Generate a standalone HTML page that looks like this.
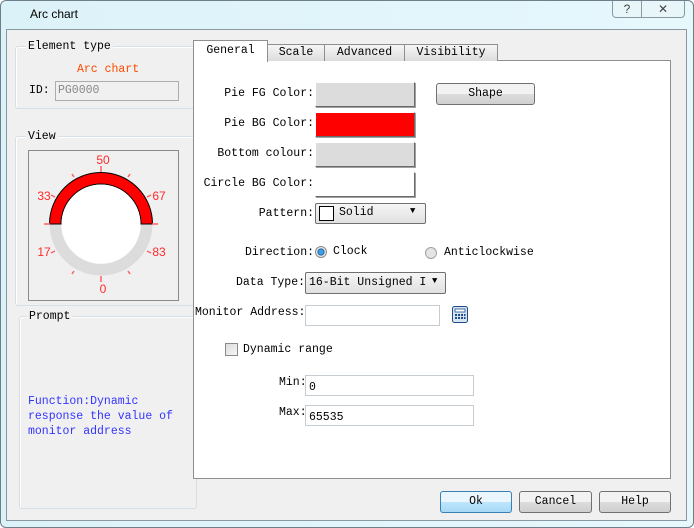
<!DOCTYPE html>
<html><head><style>
*{margin:0;padding:0;box-sizing:border-box}
body{width:694px;height:528px;position:relative;background:#fff;overflow:hidden;font-family:"Liberation Mono",monospace;font-size:11.5px;color:#000}
.a{position:absolute}
.win{left:0;top:0;width:694px;height:528px;background:linear-gradient(90deg,#dcf2f9,#e6f8fc);border:1px solid #6f7f8a;border-radius:6px}
.client{left:6px;top:29px;width:681px;height:492px;background:#f0f0f0;border:1px solid #8a98a3}
.grp{border:1px solid #d5dfe5;border-radius:3px;box-shadow:inset 1px 1px 0 #fff}
.lbl{background:#f0f0f0;padding:0 2px;white-space:nowrap}
.tab{top:44px;height:17px;background:linear-gradient(#f6f6f6,#dcdcdc);border:1px solid #8e8f8f;border-bottom:none;text-align:center;line-height:15px}
.cb{width:100px;height:25px;border:1px solid #fff;border-right-color:#6a6a6a;border-bottom-color:#6a6a6a;box-shadow:1px 1px 0 #a0a0a0}
.btn{height:22px;border:1px solid #707070;border-radius:3px;background:linear-gradient(#f2f2f2 50%,#dddddd 50%,#cfcfcf);text-align:center;line-height:20px}
.inp{height:21px;background:#fff;border:1px solid #c5cdd3;padding-left:3px;line-height:19px}
.r{text-align:right;white-space:nowrap}
</style></head><body>
<div class="a win"></div>
<div class="a" style="left:30px;top:7px;font-family:'Liberation Sans',sans-serif;font-size:12px">Arc chart</div>
<div class="a" style="left:612px;top:1px;width:30px;height:17px;border:1px solid #8a98a3;border-top:none;border-radius:0 0 0 4px;background:#e8f6fa;text-align:center;font-family:'Liberation Sans';font-size:12px;line-height:16px;color:#444">?</div>
<div class="a" style="left:642px;top:1px;width:43px;height:17px;border:1px solid #8a98a3;border-top:none;border-left:none;border-radius:0 0 4px 0;background:#e8f6fa;text-align:center;font-family:'Liberation Sans';font-size:12px;line-height:16px;color:#444">✕</div>
<div class="a client"></div>

<div class="a grp" style="left:15px;top:46px;width:180px;height:63px"></div>
<div class="a lbl" style="left:26px;top:40px">Element type</div>
<div class="a" style="left:77px;top:63px;color:#ff4b00">Arc chart</div>
<div class="a" style="left:29px;top:84px">ID:</div>
<div class="a" style="left:55px;top:81px;width:124px;height:20px;border:1px solid #adadad;background:#f0f0f0;color:#888;padding-left:2px;line-height:18px">PG0000</div>

<div class="a grp" style="left:15px;top:136px;width:180px;height:170px"></div>
<div class="a lbl" style="left:26px;top:130px">View</div>
<div class="a" style="left:28px;top:150px;width:151px;height:151px;border:1px solid #8a8a8a;background:#f0f0f0"></div>
<svg class="a" style="left:28px;top:150px" width="151" height="151" viewBox="28 150 151 151">
<path d="M49.5 224 A51.5 51.5 0 0 0 152.5 224 L141 224 A40 40 0 0 1 61 224 Z" fill="#dcdcdc"/>
<path d="M49.5 224 A51.5 51.5 0 0 1 152.5 224 L141 224 A40 40 0 0 0 61 224 Z" fill="#ff0000" stroke="#000" stroke-width="1"/>
<circle cx="101" cy="224" r="39.5" fill="#fff"/>
<g stroke="#ff6060" stroke-width="1.5">
<line x1="101" y1="166" x2="101" y2="172"/><line x1="101" y1="276" x2="101" y2="282"/>
<line x1="44" y1="224" x2="50" y2="224"/><line x1="152" y1="224" x2="158" y2="224"/>
<line x1="72" y1="174" x2="74" y2="177"/><line x1="130" y1="174" x2="128" y2="177"/>
<line x1="72" y1="274" x2="74" y2="271"/><line x1="130" y1="274" x2="128" y2="271"/>
<line x1="51" y1="195" x2="55" y2="197"/><line x1="151" y1="195" x2="147" y2="197"/>
<line x1="51" y1="253" x2="55" y2="251"/><line x1="151" y1="253" x2="147" y2="251"/>
</g>
<g fill="#ff2a2a" font-family="Liberation Sans" font-size="12" text-anchor="middle">
<text x="103" y="164">50</text><text x="44" y="200">33</text><text x="159" y="200">67</text>
<text x="44" y="256">17</text><text x="159" y="256">83</text><text x="103" y="293">0</text>
</g></svg>

<div class="a grp" style="left:19px;top:316px;width:178px;height:193px"></div>
<div class="a lbl" style="left:27px;top:310px">Prompt</div>
<div class="a" style="left:28px;top:394px;color:#3434ff;line-height:15px">Function:Dynamic<br>response the value of<br>monitor address</div>

<div class="a" style="left:193px;top:60px;width:478px;height:419px;background:#fff;border:1px solid #8e8f8f"></div>
<div class="a tab" style="left:267px;width:58px">Scale</div>
<div class="a tab" style="left:324px;width:81px">Advanced</div>
<div class="a tab" style="left:404px;width:94px">Visibility</div>
<div class="a" style="left:193px;top:40px;width:75px;height:22px;background:#fff;border:1px solid #8e8f8f;border-bottom:none;text-align:center;line-height:20px">General</div>

<div class="a r" style="right:380px;top:87px">Pie FG Color:</div>
<div class="a r" style="right:380px;top:117px">Pie BG Color:</div>
<div class="a r" style="right:380px;top:147px">Bottom colour:</div>
<div class="a r" style="right:380px;top:177px">Circle BG Color:</div>
<div class="a cb" style="left:315px;top:82px;background:#dcdcdc"></div>
<div class="a cb" style="left:315px;top:112px;background:#ff0000"></div>
<div class="a cb" style="left:315px;top:142px;background:#dcdcdc"></div>
<div class="a cb" style="left:315px;top:172px;background:#fff"></div>
<div class="a btn" style="left:436px;top:83px;width:99px">Shape</div>

<div class="a r" style="right:380px;top:207px">Pattern:</div>
<div class="a" style="left:315px;top:203px;width:111px;height:21px;border:1px solid #707070;border-radius:2px;background:linear-gradient(#f6f6f6,#e0e0e0)"></div>
<div class="a" style="left:319px;top:206px;width:15px;height:15px;border:1px solid #000;background:#fff"></div>
<div class="a" style="left:339px;top:206px">Solid</div>
<div class="a" style="left:410px;top:206px;font-size:9px">▼</div>

<div class="a r" style="right:380px;top:246px">Direction:</div>
<div class="a" style="left:315px;top:246px;width:12px;height:12px;border-radius:50%;border:1px solid #8a8a8a;background:radial-gradient(#3aa0e8 30%,#1a5a9a 45%,#e8e8e8 55%)"></div>
<div class="a" style="left:333px;top:245px">Clock</div>
<div class="a" style="left:425px;top:247px;width:12px;height:12px;border-radius:50%;border:1px solid #a0a0a0;background:#e4e4e4"></div>
<div class="a" style="left:444px;top:246px">Anticlockwise</div>

<div class="a r" style="right:389px;top:276px">Data Type:</div>
<div class="a" style="left:305px;top:272px;width:141px;height:22px;border:1px solid #707070;border-radius:2px;background:linear-gradient(#f6f6f6,#e0e0e0);padding-left:3px;line-height:20px;white-space:nowrap">16-Bit Unsigned I</div>
<div class="a" style="left:432px;top:276px;font-size:9px">▼</div>

<div class="a" style="left:195px;top:306px">Monitor Address:</div>
<div class="a inp" style="left:305px;top:305px;width:135px"></div>
<svg class="a" style="left:452px;top:306px" width="16" height="17"><rect x="0.5" y="0.5" width="15" height="16" rx="2" fill="#d8e4f0" stroke="#1e4d8a"/><rect x="3" y="3" width="10" height="3" fill="#fff" stroke="#1e4d8a" stroke-width=".8"/><g fill="#1e4d8a"><rect x="3" y="8" width="2" height="2"/><rect x="6" y="8" width="2" height="2"/><rect x="9" y="8" width="2" height="2"/><rect x="12" y="8" width="1.5" height="2"/><rect x="3" y="11" width="2" height="2"/><rect x="6" y="11" width="2" height="2"/><rect x="9" y="11" width="2" height="2"/><rect x="12" y="11" width="1.5" height="2"/></g></svg>

<div class="a" style="left:225px;top:343px;width:13px;height:13px;border:1px solid #8a8a8a;background:linear-gradient(135deg,#ddd,#f6f6f6)"></div>
<div class="a" style="left:243px;top:343px">Dynamic range</div>
<div class="a" style="left:279px;top:376px">Min:</div>
<div class="a inp" style="left:305px;top:375px;width:169px;padding-top:2px">0</div>
<div class="a" style="left:279px;top:406px">Max:</div>
<div class="a inp" style="left:305px;top:405px;width:169px;padding-top:2px">65535</div>

<div class="a btn" style="left:440px;top:491px;width:72px;border-color:#3c7fb1;background:linear-gradient(#eaf6fd 50%,#bee6fd 50%,#a7d9f5)">Ok</div>
<div class="a btn" style="left:519px;top:491px;width:73px">Cancel</div>
<div class="a btn" style="left:599px;top:491px;width:72px">Help</div>
</body></html>
